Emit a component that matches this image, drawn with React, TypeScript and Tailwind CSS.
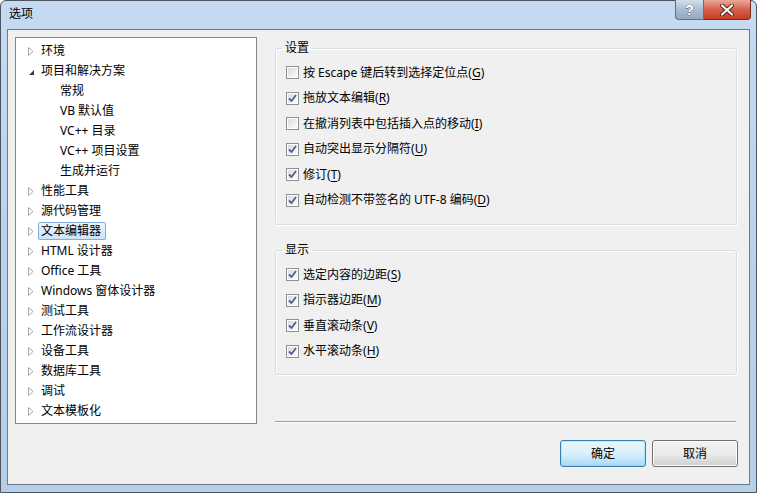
import React from 'react';

const FONT = '"Segoe UI", "Noto Sans", "Noto Sans CJK SC", sans-serif';

const TREE = [
    { label: '环境', kind: 'closed' },
    { label: '项目和解决方案', kind: 'open' },
    { label: '常规', kind: 'child' },
    { label: 'VB 默认值', kind: 'child' },
    { label: 'VC++ 目录', kind: 'child' },
    { label: 'VC++ 项目设置', kind: 'child' },
    { label: '生成并运行', kind: 'child' },
    { label: '性能工具', kind: 'closed' },
    { label: '源代码管理', kind: 'closed' },
    { label: '文本编辑器', kind: 'closed', selected: true },
    { label: 'HTML 设计器', kind: 'closed' },
    { label: 'Office 工具', kind: 'closed' },
    { label: 'Windows 窗体设计器', kind: 'closed' },
    { label: '测试工具', kind: 'closed' },
    { label: '工作流设计器', kind: 'closed' },
    { label: '设备工具', kind: 'closed' },
    { label: '数据库工具', kind: 'closed' },
    { label: '调试', kind: 'closed' },
    { label: '文本模板化', kind: 'closed' },
];

const SETTINGS = [
    { text: '按 Escape 键后转到选择定位点', key: 'G', checked: false },
    { text: '拖放文本编辑', key: 'R', checked: true },
    { text: '在撤消列表中包括插入点的移动', key: 'I', checked: false },
    { text: '自动突出显示分隔符', key: 'U', checked: true },
    { text: '修订', key: 'T', checked: true },
    { text: '自动检测不带签名的 UTF-8 编码', key: 'D', checked: true },
];

const DISPLAY = [
    { text: '选定内容的边距', key: 'S', checked: true },
    { text: '指示器边距', key: 'M', checked: true },
    { text: '垂直滚动条', key: 'V', checked: true },
    { text: '水平滚动条', key: 'H', checked: true },
];

function Arrow({ kind }: { kind: string }) {
    if (kind === 'open') {
        return (
            <svg width="7" height="7" viewBox="0 0 7 7" className="mt-[2px]">
                <path d="M6 1 L6 6 L1 6 Z" fill="#3c3c3c" />
            </svg>
        );
    }
    return (
        <svg width="6" height="9" viewBox="0 0 6 9">
            <path d="M0.5 0.5 L5 4.5 L0.5 8.5 Z" fill="#fff" stroke="#a6a6a6" strokeWidth="1" />
        </svg>
    );
}

function CheckBox({ checked }: { checked: boolean }) {
    return (
        <div className="w-[13px] h-[13px] border border-[#8f8f8f] bg-white p-[1px] shrink-0">
            <div className="w-full h-full bg-gradient-to-br from-[#dcdcdc] to-[#fbfbfb] flex items-center justify-center">
                {checked && (
                    <svg width="9" height="9" viewBox="0 0 9 9">
                        <path d="M1 4.5 L3.5 7 L8 1" fill="none" stroke="#4a5f97" strokeWidth="1.8" />
                    </svg>
                )}
            </div>
        </div>
    );
}

function Option({ text, hotkey, checked }: { text: string; hotkey: string; checked: boolean }) {
    return (
        <div className="h-[25.5px] flex items-center gap-[4px] pl-[10px]">
            <CheckBox checked={checked} />
            <span className="text-[12px] text-black leading-none">
                {text}(<span className="underline underline-offset-2">{hotkey}</span>)
            </span>
        </div>
    );
}

function Group({ title, children, className }: { title: string; children: React.ReactNode; className?: string }) {
    return (
        <fieldset className={`border border-[#d5dfe5] rounded-[3px] shadow-[inset_1px_1px_0_#fff,1px_1px_0_#fff] ${className ?? ''}`}>
            <legend className="ml-[6px] px-[3px] text-[12px] leading-[16px] text-black">{title}</legend>
            {children}
        </fieldset>
    );
}

export default function App() {
    return (
        <div className="w-[757px] h-[493px] overflow-hidden bg-white" style={{ fontFamily: FONT }}>
            <div className="w-[757px] h-[493px] rounded-t-[6px] border border-[#4d5561] bg-gradient-to-b from-[#c6dbf2] via-[#bad2ec] to-[#b6cfe9] flex flex-col px-[6px] pb-[7px]">
                {/* title bar */}
                <div className="h-[28px] flex items-start justify-between">
                    <span className="mt-[5px] ml-[2px] text-[12px] text-black leading-[16px]">选项</span>
                    <div className="flex mr-[-1px] mt-[-1px]">
                        <div className="w-[29px] h-[20px] rounded-bl-[4px] border border-[#5f6f85] border-t-0 bg-gradient-to-b from-[#d3dfec] via-[#aabcd2] to-[#93a8c2] flex items-center justify-center">
                            <span
                                className="text-[14px] font-bold leading-none text-white"
                                style={{ fontFamily: '"Liberation Sans", sans-serif', WebkitTextStroke: '0.6px #33465e', paintOrder: 'stroke fill' }}
                            >
                                ?
                            </span>
                        </div>
                        <div className="w-[47px] h-[20px] rounded-br-[4px] border border-[#7a2a1e] border-t-0 border-l-0 bg-gradient-to-b from-[#e9a99b] via-[#d5604a] to-[#c53a22] flex items-center justify-center">
                            <svg width="14" height="12" viewBox="0 0 14 12">
                                <path d="M2 1.5 L12 10.5 M12 1.5 L2 10.5" stroke="#4a2018" strokeWidth="4" strokeLinecap="round" />
                                <path d="M2 1.5 L12 10.5 M12 1.5 L2 10.5" stroke="#fff" strokeWidth="2.2" strokeLinecap="round" />
                            </svg>
                        </div>
                    </div>
                </div>

                {/* client area */}
                <div className="flex-1 border border-[#6c7b8c] bg-[#f0f0f0] flex pt-[7px] pl-[7px] pr-[12px]">
                    {/* tree */}
                    <div className="w-[242px] h-[387px] border border-[#828790] bg-white pt-[3px] shrink-0">
                        {TREE.map((item) => (
                            <div key={item.label} className={`h-[20px] flex items-center ${item.kind === 'child' ? 'pl-[41px]' : 'pl-[12px]'}`}>
                                {item.kind !== 'child' && (
                                    <div className="w-[10px] flex items-center">
                                        <Arrow kind={item.kind} />
                                    </div>
                                )}
                                <span
                                    className={`text-[12px] leading-none text-black px-[2px] h-[18px] flex items-center ${
                                        item.selected
                                            ? 'border border-[#84acdd] rounded-[2px] bg-gradient-to-b from-[#eaf4fd] to-[#cde4f8] pr-[4px]'
                                            : 'border border-transparent'
                                    }`}
                                >
                                    {item.label}
                                </span>
                            </div>
                        ))}
                    </div>

                    {/* right column */}
                    <div className="flex-1 ml-[18px] flex flex-col">
                        <Group title="设置" className="mt-[3px] pt-[4px] pb-[11px]">
                            {SETTINGS.map((o) => (
                                <Option key={o.key} text={o.text} hotkey={o.key} checked={o.checked} />
                            ))}
                        </Group>
                        <Group title="显示" className="mt-[17px] pt-[4px] pb-[10px]">
                            {DISPLAY.map((o) => (
                                <Option key={o.key} text={o.text} hotkey={o.key} checked={o.checked} />
                            ))}
                        </Group>

                        <div className="mt-[46px] h-[2px] border-t border-[#a0a0a0] border-b border-b-white mr-[1px]" />

                        <div className="mt-[17px] flex justify-end gap-[6px] mr-[-1px]">
                            <button className="w-[86px] h-[27px] rounded-[3px] border border-[#3c7fb1] bg-gradient-to-b from-[#eaf6fd] via-[#d9f0fc] to-[#a7d9f5] shadow-[inset_0_0_0_1px_#48d8fb55] text-[12px] text-black">
                                确定
                            </button>
                            <button className="w-[86px] h-[27px] rounded-[3px] border border-[#707070] bg-gradient-to-b from-[#f2f2f2] via-[#ebebeb] to-[#cfcfcf] shadow-[inset_0_0_0_1px_#fcfcfc] text-[12px] text-black">
                                取消
                            </button>
                        </div>
                    </div>
                </div>
            </div>
        </div>
    );
}
